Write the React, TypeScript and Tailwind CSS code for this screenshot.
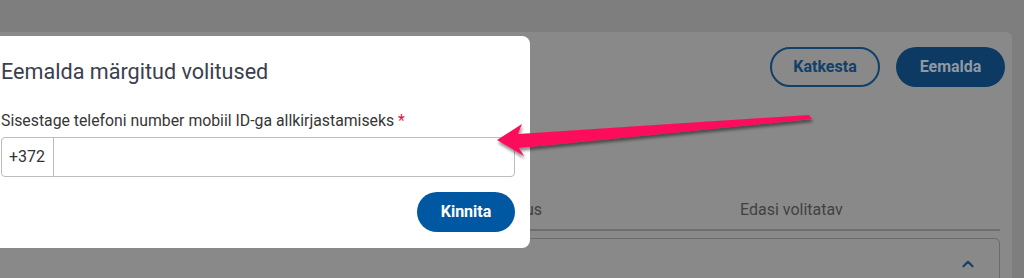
import { ChevronUp } from "lucide-react";

function Backdrop() {
  return (
    <div className="-ml-[40px] pr-[12px] pt-[32px]">
      <div className="h-[246px] rounded-tr-[6px] bg-[#898989] pr-[12px]">
        <div className="flex justify-end gap-[16px] pt-[15px]">
          <button
            type="button"
            className="h-[40px] w-[110px] rounded-full border-2 border-[#114069] text-[16px] font-bold text-[#114069]"
          >
            Katkesta
          </button>
          <button
            type="button"
            className="-mr-[5px] h-[40px] w-[109px] rounded-full bg-[#0c3a62] text-[16px] font-bold text-[#8f99a3]"
          >
            Eemalda
          </button>
        </div>
        <div className="mt-[111px] flex pl-[533px] text-[16px] leading-[24px] text-[#414141]">
          <span className="w-[247px]">Volitus</span>
          <span>Edasi volitatav</span>
        </div>
        <div className="mt-[7px] h-[2px] bg-[#6e6e6e]" />
        <div className="mt-[7px] flex h-[60px] justify-end rounded-[5px] border border-[#6b6b6b] pr-[22px] pt-[16px]">
          <ChevronUp size={18} strokeWidth={3} className="text-[#174469]" />
        </div>
      </div>
    </div>
  );
}

function Arrow() {
  return (
    <svg
      className="pointer-events-none absolute inset-0"
      width={1024}
      height={278}
      viewBox="0 0 1024 278"
    >
      <defs>
        <filter id="arrowShadow" x="-10%" y="-50%" width="120%" height="200%">
          <feDropShadow dx="1" dy="3" stdDeviation="1.6" floodColor="#000" floodOpacity="0.45" />
        </filter>
      </defs>
      <polygon
        points="497,140 522,124 518,134 809,115 812,119 519,148 524,156"
        fill="#fb0d5c"
        filter="url(#arrowShadow)"
      />
    </svg>
  );
}

function RemoveDialog() {
  return (
    <div className="absolute left-0 top-[36px] flex h-[212px] w-[530px] flex-col rounded-r-[8px] bg-white pl-[1px] pr-[15px] pt-[22px]">
      <h2 className="text-[21.6px] leading-[28px] text-[#3a404e]">
        Eemalda märgitud volitused
      </h2>
      <label className="mt-[23px] text-[15.8px] leading-[24px] text-[#363636]">
        Sisestage telefoni number mobiil ID-ga allkirjastamiseks{" "}
        <span className="text-[#d3194a]">*</span>
      </label>
      <div className="mt-[4px] flex h-[40px] rounded-[4px] border border-[#bcbcbc]">
        <span className="flex w-[52px] items-center border-r border-[#bcbcbc] pl-[7px] text-[16px] text-[#333]">
          +372
        </span>
        <input className="flex-1 bg-transparent outline-none" />
      </div>
      <div className="mt-[15px] flex justify-end">
        <button
          type="button"
          className="h-[40px] w-[98px] rounded-full bg-[#0058a3] text-[16px] font-bold text-white"
        >
          Kinnita
        </button>
      </div>
    </div>
  );
}

export default function App() {
  return (
    <div className="relative h-[278px] w-[1024px] overflow-hidden bg-[#7e7e7e] font-['Roboto',sans-serif]">
      <Backdrop />
      <RemoveDialog />
      <Arrow />
    </div>
  );
}
